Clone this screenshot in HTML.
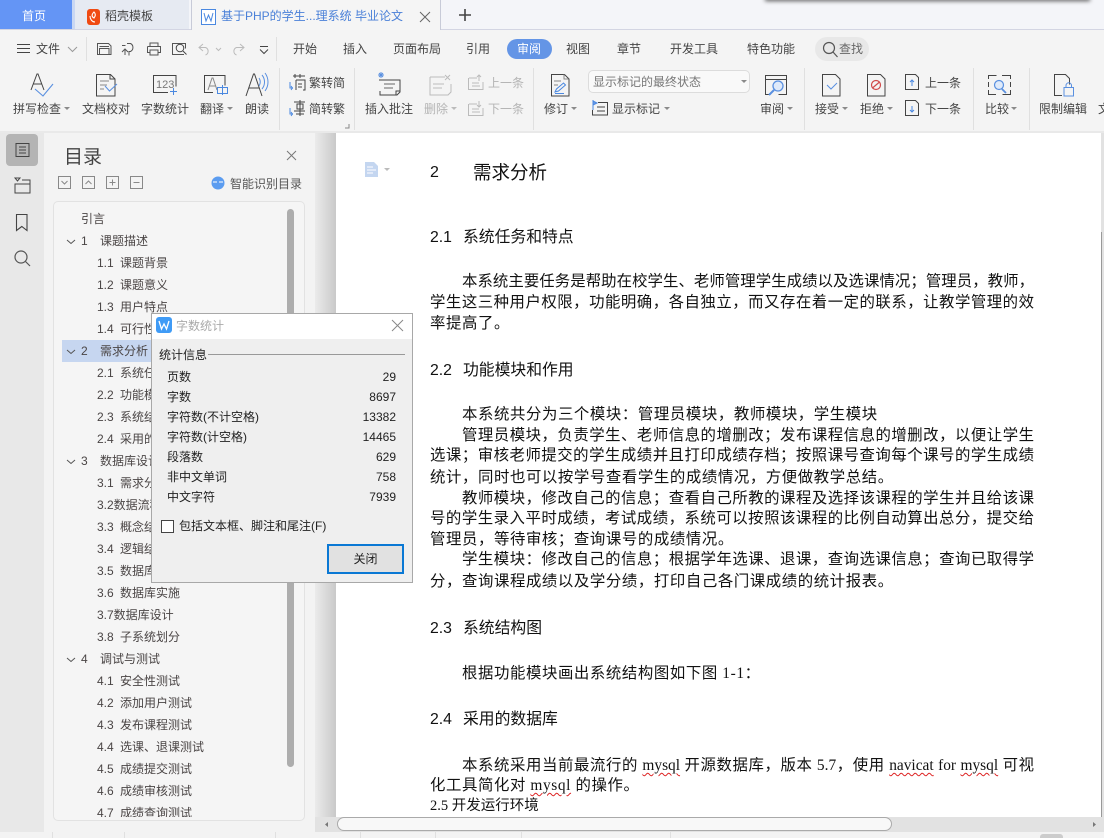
<!DOCTYPE html>
<html lang="zh"><head><meta charset="utf-8"><title>字数统计</title>
<style>
html,body{margin:0;padding:0;width:1104px;height:838px;overflow:hidden;background:#f3f3f3}
body{position:relative;font-family:"Liberation Sans","Noto Sans CJK SC",sans-serif;font-size:12px;color:#444}
.a{position:absolute}
.t{position:absolute;white-space:nowrap;line-height:16px;height:16px;font-size:12px;color:#444}
.g{color:#b4b4b4}
.car{position:absolute;width:0;height:0;border:3px solid transparent;border-top:3.5px solid #8a8a8a;border-bottom:0}
.sep{position:absolute;width:1px;background:#e0e0e0}
.toc{position:absolute;white-space:nowrap;line-height:16px;font-size:12px;color:#4a4545}
.toc b{display:inline-block;font-weight:400;width:23px}
.toc.m{left:27px}.toc.m b{width:19px}
.toc.s{left:43px}
.l{position:absolute;font-family:"Liberation Serif","Noto Sans CJK SC",sans-serif;font-size:15.4px;line-height:22px;height:22px;color:#111}
.j{text-align:justify;text-align-last:justify}
.n{white-space:nowrap;letter-spacing:.6px}
.h{position:absolute;white-space:nowrap;font-size:15.8px;line-height:20px;color:#111}
.w{text-decoration:underline wavy #d22;text-decoration-thickness:1px;text-underline-offset:2px}
.d{color:#222}
svg{position:absolute;left:0;top:0;overflow:visible}
</style></head><body>

<!-- title bar -->
<div class="a" style="left:0;top:0;width:1104px;height:29px;background:#f4f5f9"></div>
<div class="a" style="left:765px;top:-3px;width:325px;height:4px;background:#555;filter:blur(2px)"></div>
<div class="a" style="left:0;top:0;width:72px;height:29px;background:#6495f5"></div>
<div class="a" style="left:72px;top:0;width:3px;height:29px;background:#c9d7f3"></div>
<div class="a" style="left:75px;top:0;width:114px;height:29px;background:#e6eaf2"></div>
<div class="a" style="left:0;top:29px;width:1104px;height:1px;background:#d3d5e3"></div>
<div class="a" style="left:191px;top:0;width:250px;height:30px;background:#f5f5f5;border-left:1px solid #c8cbd8;border-right:1px solid #c8cbd8;box-sizing:border-box"></div>
<div class="t" style="left:22px;top:8px;color:#fff">首页</div>
<div class="t" style="left:105px;top:8px;color:#444">稻壳模板</div>
<div class="t" style="left:221px;top:8px;color:#4a80d8">基于PHP的学生...理系统 毕业论文</div>

<!-- ribbon -->
<div class="a" style="left:0;top:30px;width:1104px;height:102px;background:#f4f4f4"></div>
<div class="a" style="left:0;top:131px;width:1104px;height:2px;background:#e9e9e9"></div>
<div class="t" style="left:36px;top:41px;">文件</div>
<div class="sep" style="left:86px;top:37px;height:24px"></div>
<div class="sep" style="left:276px;top:37px;height:24px"></div>
<div class="t" style="left:293px;top:41px">开始</div>
<div class="t" style="left:343px;top:41px">插入</div>
<div class="t" style="left:393px;top:41px">页面布局</div>
<div class="t" style="left:466px;top:41px">引用</div>
<div class="a" style="left:507px;top:39px;width:45px;height:20px;border-radius:10px;background:#6495e6"></div>
<div class="t" style="left:517px;top:41px;color:#fff">审阅</div>
<div class="t" style="left:566px;top:41px">视图</div>
<div class="t" style="left:617px;top:41px">章节</div>
<div class="t" style="left:670px;top:41px">开发工具</div>
<div class="t" style="left:747px;top:41px">特色功能</div>
<div class="a" style="left:815px;top:37px;width:54px;height:24px;border-radius:12px;background:#e8e8e8"></div>
<div class="t" style="left:839px;top:41px;color:#666">查找</div>

<div class="t" style="left:13px;top:101px">拼写检查</div><div class="car" style="left:64px;top:107px"></div>
<div class="t" style="left:82px;top:101px">文档校对</div>
<div class="t" style="left:141px;top:101px">字数统计</div>
<div class="t" style="left:200px;top:101px">翻译</div><div class="car" style="left:227px;top:107px"></div>
<div class="t" style="left:245px;top:101px">朗读</div>
<div class="sep" style="left:279px;top:68px;height:62px"></div>
<div class="t" style="left:309px;top:75px">繁转简</div>
<div class="t" style="left:309px;top:101px">简转繁</div>
<div class="sep" style="left:354px;top:68px;height:62px"></div>
<div class="t" style="left:365px;top:101px">插入批注</div>
<div class="t g" style="left:424px;top:101px">删除</div><div class="car" style="left:451px;top:107px;border-top-color:#bbb"></div>
<div class="t g" style="left:488px;top:75px">上一条</div>
<div class="t g" style="left:488px;top:101px">下一条</div>
<div class="sep" style="left:533px;top:68px;height:62px"></div>
<div class="t" style="left:544px;top:101px">修订</div><div class="car" style="left:571px;top:107px"></div>
<div class="a" style="left:588px;top:70px;width:162px;height:23px;box-sizing:border-box;border:1px solid #dcdcdc;border-radius:5px;background:#f9f9f9"></div>
<div class="t" style="left:593px;top:74px;color:#777">显示标记的最终状态</div><div class="car" style="left:741px;top:80px"></div>
<div class="t" style="left:612px;top:101px">显示标记</div><div class="car" style="left:664px;top:107px"></div>
<div class="t" style="left:760px;top:101px">审阅</div><div class="car" style="left:787px;top:107px"></div>
<div class="sep" style="left:804px;top:68px;height:62px"></div>
<div class="t" style="left:815px;top:101px">接受</div><div class="car" style="left:842px;top:107px"></div>
<div class="t" style="left:860px;top:101px">拒绝</div><div class="car" style="left:887px;top:107px"></div>
<div class="t" style="left:925px;top:75px">上一条</div>
<div class="t" style="left:925px;top:101px">下一条</div>
<div class="sep" style="left:973px;top:68px;height:62px"></div>
<div class="t" style="left:985px;top:101px">比较</div><div class="car" style="left:1011px;top:107px"></div>
<div class="sep" style="left:1029px;top:68px;height:62px"></div>
<div class="t" style="left:1039px;top:101px">限制编辑</div>
<div class="t" style="left:1098px;top:101px">文</div>

<!-- left rail + panel -->
<div class="a" style="left:0;top:133px;width:44px;height:699px;background:#e8e8e8"></div>
<div class="a" style="left:6px;top:134px;width:32px;height:32px;border-radius:4px;background:#b4b4b4"></div>
<div class="a" style="left:44px;top:133px;width:271px;height:699px;background:#f3f3f3"></div>
<div class="a" style="left:315px;top:133px;width:21px;height:684px;background:linear-gradient(90deg,#ebebeb,#c9c9c9)"></div>
<div class="a" style="left:336px;top:133px;width:768px;height:684px;background:#fff"></div>
<div class="a" style="left:1101px;top:133px;width:3px;height:684px;background:#e2e2e2"></div>
<div class="a" style="left:1101px;top:232px;width:1px;height:585px;background:#999"></div>
<div class="a" style="left:64px;top:145px;font-size:19px;line-height:26px;color:#444">目录</div>
<div class="t" style="left:230px;top:176px;color:#555">智能识别目录</div>

<div class="a" style="left:53px;top:201px;width:252px;height:620px;box-sizing:border-box;border:1px solid #e2e2e2;border-radius:5px;background:#f5f5f5;overflow:hidden">
<div class="a" style="left:8px;top:138px;width:240px;height:22px;background:#c6d6f0"></div>
<div class="a" style="left:233px;top:7px;width:7px;height:558px;border-radius:4px;background:#adadad"></div>
<div class="toc" style="left:27px;top:9px">引言</div>
<div class="toc m" style="top:31px"><b>1</b>课题描述</div>
<div class="toc s" style="top:53px"><b>1.1</b>课题背景</div>
<div class="toc s" style="top:75px"><b>1.2</b>课题意义</div>
<div class="toc s" style="top:97px"><b>1.3</b>用户特点</div>
<div class="toc s" style="top:119px"><b>1.4</b>可行性分析</div>
<div class="toc m" style="top:141px"><b>2</b>需求分析</div>
<div class="toc s" style="top:163px"><b>2.1</b>系统任务和特点</div>
<div class="toc s" style="top:185px"><b>2.2</b>功能模块和作用</div>
<div class="toc s" style="top:207px"><b>2.3</b>系统结构图</div>
<div class="toc s" style="top:229px"><b>2.4</b>采用的数据库</div>
<div class="toc m" style="top:251px"><b>3</b>数据库设计</div>
<div class="toc s" style="top:273px"><b>3.1</b>需求分析</div>
<div class="toc s" style="top:295px">3.2数据流程图</div>
<div class="toc s" style="top:317px"><b>3.3</b>概念结构</div>
<div class="toc s" style="top:339px"><b>3.4</b>逻辑结构</div>
<div class="toc s" style="top:361px"><b>3.5</b>数据库结构</div>
<div class="toc s" style="top:383px"><b>3.6</b>数据库实施</div>
<div class="toc s" style="top:405px">3.7数据库设计</div>
<div class="toc s" style="top:427px"><b>3.8</b>子系统划分</div>
<div class="toc m" style="top:449px"><b>4</b>调试与测试</div>
<div class="toc s" style="top:471px"><b>4.1</b>安全性测试</div>
<div class="toc s" style="top:493px"><b>4.2</b>添加用户测试</div>
<div class="toc s" style="top:515px"><b>4.3</b>发布课程测试</div>
<div class="toc s" style="top:537px"><b>4.4</b>选课、退课测试</div>
<div class="toc s" style="top:559px"><b>4.5</b>成绩提交测试</div>
<div class="toc s" style="top:581px"><b>4.6</b>成绩审核测试</div>
<div class="toc s" style="top:603px;height:12px;overflow:hidden"><b>4.7</b>成绩查询测试</div>
</div>

<!-- document -->
<div class="h" style="left:430px;top:163px;font-size:16px">2</div>
<div class="h" style="left:473px;top:163px;font-size:18.5px">需求分析</div>
<div class="h" style="left:430px;top:228px">2.1</div><div class="h" style="left:463px;top:228px">系统任务和特点</div>
<div class="h" style="left:430px;top:361px">2.2</div><div class="h" style="left:463px;top:361px">功能模块和作用</div>
<div class="h" style="left:430px;top:619px">2.3</div><div class="h" style="left:463px;top:619px">系统结构图</div>
<div class="h" style="left:430px;top:710px">2.4</div><div class="h" style="left:463px;top:710px">采用的数据库</div>

<div class="l j" style="left:462px;top:271px;width:572px">本系统主要任务是帮助在校学生、老师管理学生成绩以及选课情况&#65307;管理员&#65292;教师&#65292;</div>
<div class="l j" style="left:430px;top:292px;width:604px">学生这三种用户权限&#65292;功能明确&#65292;各自独立&#65292;而又存在着一定的联系&#65292;让教学管理的效</div>
<div class="l n" style="left:430px;top:313px">率提高了。</div>
<div class="l n" style="left:462px;top:404px">本系统共分为三个模块&#65306;管理员模块&#65292;教师模块&#65292;学生模块</div>
<div class="l j" style="left:462px;top:425px;width:572px">管理员模块&#65292;负责学生、老师信息的增删改&#65307;发布课程信息的增删改&#65292;以便让学生</div>
<div class="l j" style="left:430px;top:445px;width:604px">选课&#65307;审核老师提交的学生成绩并且打印成绩存档&#65307;按照课号查询每个课号的学生成绩</div>
<div class="l n" style="left:430px;top:467px">统计&#65292;同时也可以按学号查看学生的成绩情况&#65292;方便做教学总结。</div>
<div class="l j" style="left:462px;top:488px;width:572px">教师模块&#65292;修改自己的信息&#65307;查看自己所教的课程及选择该课程的学生并且给该课</div>
<div class="l j" style="left:430px;top:508px;width:604px">号的学生录入平时成绩&#65292;考试成绩&#65292;系统可以按照该课程的比例自动算出总分&#65292;提交给</div>
<div class="l n" style="left:430px;top:529px">管理员&#65292;等待审核&#65307;查询课号的成绩情况。</div>
<div class="l j" style="left:462px;top:549px;width:572px">学生模块&#65306;修改自己的信息&#65307;根据学年选课、退课&#65292;查询选课信息&#65307;查询已取得学</div>
<div class="l n" style="left:430px;top:571px">分&#65292;查询课程成绩以及学分绩&#65292;打印自己各门课成绩的统计报表。</div>
<div class="l n" style="left:462px;top:663px">根据功能模块画出系统结构图如下图 1-1&#65306;</div>
<div class="l j" style="left:462px;top:755px;width:572px">本系统采用当前最流行的 <span class="w">mysql</span> 开源数据库&#65292;版本 5.7&#65292;使用 <span class="w">navicat</span> for <span class="w">mysql</span> 可视</div>
<div class="l n" style="left:430px;top:775px">化工具简化对 <span class="w">mysql</span> 的操作。</div>
<div class="l" style="left:430px;top:795px;font-size:14.5px">2.5 开发运行环境</div>

<!-- bottom -->
<div class="a" style="left:315px;top:817px;width:789px;height:15px;background:#e2e2e2"></div>
<div class="a" style="left:337px;top:817px;width:555px;height:14px;box-sizing:border-box;border:1px solid #aaa;border-radius:7px;background:#f8f8f8"></div>
<div class="a" style="left:0;top:832px;width:1104px;height:6px;background:#f3f3f3"></div>
<div class="a" style="left:1040px;top:834px;width:23px;height:4px;background:#ccc;border-radius:3px 3px 0 0"></div>
<div class="sep" style="left:52px;top:832px;height:6px"></div>
<div class="sep" style="left:124px;top:832px;height:6px"></div>
<div class="sep" style="left:275px;top:832px;height:6px"></div>
<div class="sep" style="left:360px;top:832px;height:6px"></div>
<div class="sep" style="left:435px;top:832px;height:6px"></div>
<div class="sep" style="left:521px;top:832px;height:6px"></div>
<div class="sep" style="left:670px;top:832px;height:6px"></div>

<!-- icons -->
<svg width="1104" height="838" fill="none" stroke="#555" stroke-width="1">
<!-- tabs -->
<rect x="87" y="9" width="13" height="16" rx="3" fill="#f04a12" stroke="none"/>
<path d="M94 12c-3 3-2 5 0 6 1.500-2 2-4 0-6zM90 16c0 3 2 6 5 6" stroke="#fff" stroke-width="1.100"/>
<rect x="201.500" y="9.500" width="14" height="15" stroke="#4a88e0" fill="#fff"/>
<path d="M204 13l2 8 2.500-6 2.500 6 2-8" stroke="#4a88e0"/>
<path d="M420 12l10 10M430 12l-10 10" stroke="#666"/>
<path d="M459 15h12M465 9v12" stroke="#444" stroke-width="1.600"/>
<!-- row2 -->
<path d="M17 44.500h13M17 48.500h13M17 52.500h13" stroke="#444"/>
<path d="M68 47l4.500 4.500 4.500-4.500" stroke="#999"/>
<path d="M97.500 43.500h11l2.500 2.500v8.500h-13.500zM99.500 54.500v-6h9.500v6M99.500 46.500h9.500" />
<path d="M122 45.500h3.500M127 43.500h3.500a4.500 4.500 0 0 1 0 8h-1.500v4M122 52l3-3 3 3M125 49v6" />
<path d="M150 46v-3h8v3M147.500 46.500h13v6h-2.500M150 52.500h-2.500v-6M150 50h8v5h-8z"/>
<path d="M184 54.500h-11.500v-11h13v5"/><circle cx="180" cy="48" r="3.800" stroke="#444"/><path d="M183 51l3.500 3.500" stroke="#444"/>
<path d="M203 44l-4 3.500 4 3.500M199.500 47.500h6a4 4 0 0 1 0 7.500" stroke="#bbb"/>
<path d="M216 48l2.500 2.500 2.500-2.500" stroke="#bbb"/>
<path d="M240 44l4 3.500-4 3.500M243.500 47.500h-7a4 4 0 0 0 0 7.500" stroke="#bbb"/>
<path d="M260 46.500h8M260 49.500l4 4 4-4" stroke="#444"/>
<circle cx="829" cy="48" r="5.500" stroke="#555" stroke-width="1.200"/><path d="M833 52l4.500 5" stroke="#555" stroke-width="1.200"/>
<!-- row3 -->
<path d="M31 90l6-16h1l6 16M33.500 84h8.500" stroke="#444"/>
<path d="M35 89l8 7 10-12" stroke="#5a90e0" stroke-width="1.100"/>
<path d="M96.500 74.500h14l4.500 4.500v17h-18.500zM110 74.500v4.500h4.500" stroke="#444"/>
<path d="M100 81h9M100 85h7M100 89h4" stroke="#888"/>
<path d="M105 86l4.500 5 7.500-7" stroke="#5a90e0"/>
<path d="M168 92.500h-14.500v-17h22.500v11" stroke="#444"/>
<text x="156" y="88" font-family="Liberation Sans" font-size="11" fill="#777" stroke="none">123</text>
<path d="M170 91.500h7M173.500 88v7" stroke="#4a88e0"/>
<path d="M213 92.500h-8.500v-17h20.500v10" stroke="#444"/>
<path d="M208 90l4-12h1l4 12M209.500 86h6" stroke="#888"/>
<rect x="217.500" y="87.500" width="10" height="6" stroke="#4a88e0"/><path d="M222.500 85v10" stroke="#4a88e0"/>
<path d="M246 96l7.500-22h1l7.500 22M249 88h10" stroke="#444"/>
<path d="M259 78a7 7 0 0 1 0 8M262 75a11 11 0 0 1 0 14M265 73a15 15 0 0 1 0 18" stroke="#5a90e0"/>
<!-- fanjian -->
<path d="M293 76h12M295 74v4M300 74v4M296 80h9v10h-2M298 84h4M298 87h4M296 80v10" stroke="#444"/><path d="M290 82v6h3M291 90l1.500-2-1.500-2" stroke="#4a88e0"/>
<path d="M294 102h11M297 104h6v5h-6zM294 111h11M296 114h8M300 100v16" stroke="#444"/><path d="M290 108v6h3M291 116l1.500-2-1.500-2" stroke="#4a88e0"/>
<path d="M349 124v4h-4" stroke="#888"/>
<!-- comment -->
<path d="M379 80h21v12l-3 3h-17v-4" stroke="#444"/><path d="M396 95v-4h4" stroke="#444"/>
<path d="M384 84h11M384 88h9" stroke="#666"/>
<path d="M378 75h6M381 72v6M379 73l4 4M383 73l-4 4" stroke="#5a90e0"/>
<path d="M430 77h15M430 77v18h18l3-3v-8M433 84h11M433 88h9" stroke="#bbb"/><path d="M445 75l5 5M450 75l-5 5" stroke="#bbb"/>
<path d="M469 78h8M483 82v7.500h-14.500V78M472 83h7M472 86h8M479 75v6M477 77l2-2 2 2" stroke="#bbb"/>
<path d="M469 104h8M483 108v7.500h-14.500V104M472 109h7M472 112h8M479 101v6M477 105l2 2 2-2" stroke="#bbb"/>
<!-- track -->
<path d="M551.500 74.500h13l4.500 4.500v17h-17.500z" stroke="#444"/><path d="M564 74.500v4.500h4.500M554 81h7M554 85h4" stroke="#888"/>
<path d="M555 92l1.500-3 7-6 2 2-7 6zM555 93.500h9" stroke="#4a88e0"/>
<path d="M593 100v10M593 101l4 2-4 2" stroke="#4a88e0" fill="#6a9ae8"/><path d="M598 102.500h9.500v12.500h-15v-5M597 107h8M597 111h8" stroke="#444"/>
<path d="M769 94.500h-3.500v-19h21v19h-8M765.500 79.500h21" stroke="#444"/>
<circle cx="778" cy="86" r="5" stroke="#5a90e0" stroke-width="1.300" fill="#dfeafa"/><path d="M774 90l-5 5" stroke="#5a90e0" stroke-width="2"/>
<path d="M822.500 74.500h13l4.500 4.500v17h-17.500z" stroke="#444"/><path d="M827 85l4 4 6-6" stroke="#5a90e0"/>
<path d="M867.500 74.500h13l4.500 4.500v17h-17.500z" stroke="#444"/><circle cx="876" cy="85" r="4.500" stroke="#d04a4a" stroke-width="1.200"/><path d="M872.500 88l7-6" stroke="#d04a4a" stroke-width="1.200"/>
<path d="M905.500 74.500h10l3 3v12h-13z" stroke="#444"/><path d="M912 86v-6M910 82l2-2 2 2" stroke="#4a88e0"/>
<path d="M905.500 100.500h10l3 3v12h-13z" stroke="#444"/><path d="M912 106v6M910 110l2 2 2-2" stroke="#4a88e0"/>
<path d="M988.500 79v-3.500h8M1002 75.500h8.500v3.500M1010.500 90v4.500h-8M996 94.500h-7.500v-4.500M988.500 82v5M1010.500 82v5" stroke="#444"/>
<circle cx="999" cy="85" r="4.500" stroke="#5a90e0" stroke-width="1.200" fill="#dfeafa"/><path d="M1002 89l4 4" stroke="#5a90e0" stroke-width="1.800"/>
<path d="M1062 95.500h-7.500v-21h11l4 4v6" stroke="#444"/>
<rect x="1064" y="87.500" width="9.500" height="8.500" stroke="#5a90e0"/><path d="M1066 87.500v-2a2.700 2.700 0 0 1 5.500 0v2" stroke="#5a90e0"/>
<!-- rail -->
<path d="M16 143.500h13v13h-13zM19 147h7M19 150h7M19 153h7" stroke="#444"/>
<path d="M15 178l5 0-2.500 3zM22 180h8v13h-15v-9h15" stroke="#444"/>
<path d="M16.500 214.500h10.500v16l-5.200-4-5.300 4z" stroke="#444" stroke-width="1.100"/>
<circle cx="21" cy="257" r="6" stroke="#555" stroke-width="1.200"/><path d="M25.500 261.500l4.500 4.500" stroke="#555" stroke-width="1.200"/>
<!-- panel -->
<path d="M287 151l9 9M296 151l-9 9" stroke="#777"/>
<g stroke="#888"><rect x="58.500" y="176.500" width="12" height="12"/><path d="M61.500 181l3 3 3-3"/>
<rect x="82.500" y="176.500" width="12" height="12"/><path d="M85.500 184l3-3 3 3"/>
<rect x="106.500" y="176.500" width="12" height="12"/><path d="M109.500 182.500h6M112.500 179.500v6"/>
<rect x="130.500" y="176.500" width="12" height="12"/><path d="M133.500 182.500h6"/></g>
<circle cx="218" cy="183" r="6.500" fill="#5b9cf0" stroke="none"/><path d="M213 182h4M219 182h4" stroke="#fff"/>
<g stroke="#555"><path d="M67 240l4 3.500 4-3.500"/><path d="M67 350l4 3.500 4-3.500"/><path d="M67 460l4 3.500 4-3.500"/><path d="M67 658l4 3.500 4-3.500"/></g>
<!-- doc margin icon -->
<path d="M365 162h9l4 4v11h-13z" fill="#c4d6f0" stroke="none"/><path d="M367 167h6M367 170h9M367 173h6" stroke="#fff"/>
<path d="M384 168h6l-3 3z" fill="#bbb" stroke="none"/>
<path d="M328 822v5l-3-2.500zM1093 822v5l3-2.500z" fill="#777" stroke="none"/>
</svg>

<!-- dialog -->
<div class="a" style="left:151px;top:313px;width:262px;height:270px;box-sizing:border-box;border:1px solid #a8a8a8;background:#efefef;z-index:5">
<div class="a" style="left:0;top:0;width:260px;height:25px;background:#fff"></div>
<svg width="260" height="268" fill="none" stroke="#888">
<rect x="4" y="3" width="16" height="16" rx="3" fill="#3f9bf6" stroke="none"/>
<path d="M7 7l2.500 8 2.500-5 2.500 5 2.500-8" stroke="#fff" stroke-width="1.300"/>
<path d="M240 6l11 11M251 6l-11 11" stroke="#888"/>
<path d="M56 40.500h197" stroke="#999"/>
<rect x="9.500" y="206.500" width="12" height="12" fill="#fff" stroke="#444"/>
</svg>
<div class="t" style="left:24px;top:4px;color:#aaa">字数统计</div>
<div class="t d" style="left:7px;top:33px">统计信息</div>
<div class="t d" style="left:15px;top:55px">页数</div><div class="t d" style="right:16px;top:55px">29</div>
<div class="t d" style="left:15px;top:75px">字数</div><div class="t d" style="right:16px;top:75px">8697</div>
<div class="t d" style="left:15px;top:95px">字符数(不计空格)</div><div class="t d" style="right:16px;top:95px">13382</div>
<div class="t d" style="left:15px;top:115px">字符数(计空格)</div><div class="t d" style="right:16px;top:115px">14465</div>
<div class="t d" style="left:15px;top:135px">段落数</div><div class="t d" style="right:16px;top:135px">629</div>
<div class="t d" style="left:15px;top:155px">非中文单词</div><div class="t d" style="right:16px;top:155px">758</div>
<div class="t d" style="left:15px;top:175px">中文字符</div><div class="t d" style="right:16px;top:175px">7939</div>
<div class="t d" style="left:27px;top:204px">包括文本框、脚注和尾注(F)</div>
<div class="a d" style="left:175px;top:230px;width:77px;height:30px;box-sizing:border-box;border:2px solid #0a78d4;background:#e1e1e1;text-align:center;line-height:26px">关闭</div>
</div>
</body></html>
